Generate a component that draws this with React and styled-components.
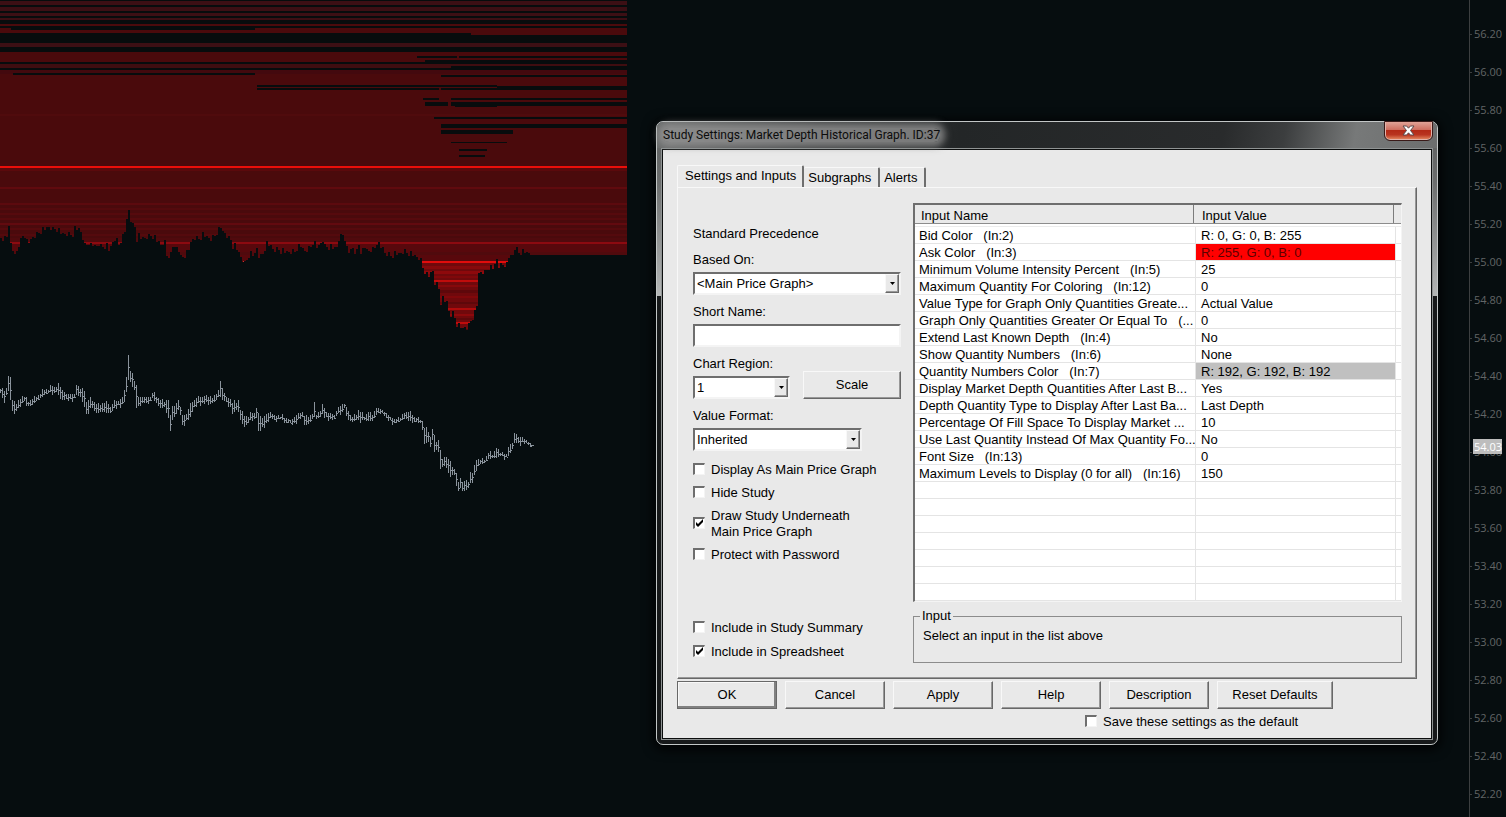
import React, { useState } from "react";
import styled, { createGlobalStyle, css } from "styled-components";

const prices = [
  "56.40", "56.20", "56.00", "55.80", "55.60", "55.40", "55.20", "55.00",
  "54.80", "54.60", "54.40", "54.20", "54.00", "53.80", "53.60", "53.40",
  "53.20", "53.00", "52.80", "52.60", "52.40", "52.20",
];

const inputs = [
  { name: "Bid Color   (In:2)", value: "R: 0, G: 0, B: 255" },
  { name: "Ask Color   (In:3)", value: "R: 255, G: 0, B: 0", bg: "#ff0000", color: "#5c0000" },
  { name: "Minimum Volume Intensity Percent   (In:5)", value: "25" },
  { name: "Maximum Quantity For Coloring   (In:12)", value: "0" },
  { name: "Value Type for Graph Only Quantities Greate...", value: "Actual Value" },
  { name: "Graph Only Quantities Greater Or Equal To   (...", value: "0" },
  { name: "Extend Last Known Depth   (In:4)", value: "No" },
  { name: "Show Quantity Numbers   (In:6)", value: "None" },
  { name: "Quantity Numbers Color   (In:7)", value: "R: 192, G: 192, B: 192", bg: "#c0c0c0" },
  { name: "Display Market Depth Quantities After Last B...", value: "Yes" },
  { name: "Depth Quantity Type to Display After Last Ba...", value: "Last Depth" },
  { name: "Percentage Of Fill Space To Display Market ...", value: "10" },
  { name: "Use Last Quantity Instead Of Max Quantity Fo...", value: "No" },
  { name: "Font Size   (In:13)", value: "0" },
  { name: "Maximum Levels to Display (0 for all)   (In:16)", value: "150" },
];

// lower edge of the ask depth area
const depthEdge =
  "0,238 3,239 6,236 7,223 9,223 9,237 10,246 12,250 14,255 16,251 18,245 20,240 22,235 24,235 25,242 29,242 31,238 34,236 37,233 41,230 44,229 49,226 51,230 54,228 57,230 60,233 64,234 72,234 73,229 79,229 81,234 82,238 84,245 88,242 90,246 93,244 95,248 97,243 100,246 106,246 108,250 111,245 113,238 116,240 118,244 121,238 123,235 125,227 127,213 128,210 129,214 131,225 134,226 135,243 137,234 139,238 145,238 150,235 153,236 155,240 158,242 160,245 165,241 166,255 171,255 172,246 173,251 175,245 178,250 180,257 183,256 187,252 189,245 191,240 193,238 198,238 202,235 205,237 210,239 213,236 215,233 218,230 220,227 221,232 224,233 227,238 230,239 231,246 234,246 237,250 239,255 241,259 244,263 246,259 248,255 251,253 253,257 256,248 257,255 259,257 262,253 264,248 266,244 270,246 273,250 277,248 280,251 287,252 294,251 297,247 301,246 303,251 306,250 310,246 313,240 315,247 319,246 321,240 323,240 324,246 330,247 333,249 336,247 337,240 339,237 342,234 344,238 345,247 348,252 352,248 353,253 357,250 358,244 359,251 363,251 364,247 367,252 370,250 374,247 376,242 378,245 382,248 383,253 390,255 397,254 404,251 407,253 413,255 417,257 420,260 422,267 425,273 427,277 430,273 432,271 433,283 436,284 438,288 439,303 442,299 446,302 447,305 449,316 452,313 454,317 456,324 460,327 462,329 463,325 465,329 467,327 469,322 472,317 474,313 476,305 477,300 477,275 481,271 483,273 487,267 492,268 495,263 496,259 497,266 502,264 507,265 507,257 512,255 513,247 516,249 518,252 523,252 528,253 530,255 627,255";

// x, y, width, height, fill
const depthLevels = [
  [0, 0, 627, 20, "#3c0f14"],
  [0, 43, 627, 4, "#3c0f14"],
  [0, 64, 627, 4, "#3f0d10"],
  [0, 70, 627, 4, "#43090e"],
  [0, 114, 627, 2, "#500b0d"],
  [0, 168, 627, 3, "#5a090c"],
  [0, 187, 627, 2, "#600a0e"],
  [0, 203, 627, 2, "#5c0a0e"],
  [0, 208, 627, 2, "#540a0d"],
  [0, 213, 627, 2, "#560a0d"],
  [0, 218, 627, 2, "#560a0d"],
  [0, 223, 627, 2, "#620a0f"],
  [0, 228, 627, 2, "#560a0d"],
  [0, 234, 627, 2, "#540a0d"],
  [0, 238, 627, 4, "#500a0d"],
  [0, 242, 627, 2, "#8c0a10"],
  [0, 244, 627, 17, "#58080c"],
  [0, 252, 627, 3, "#500a0d"],
  [415, 263, 100, 66, "#70090c"],
  [415, 266, 100, 3, "#86090c"],
  [415, 271, 100, 3, "#8e090c"],
  [415, 276, 100, 2, "#80080b"],
  [415, 280, 100, 2, "#c00c0c"],
  [415, 285, 100, 2, "#86090c"],
  [415, 290, 100, 3, "#5e080b"],
  [415, 296, 100, 2, "#80080b"],
  [415, 302, 100, 2, "#5e080b"],
  [415, 308, 100, 2, "#b00b0c"],
  [415, 314, 100, 2, "#8c090c"],
  [415, 318, 100, 2, "#5e080b"],
  [415, 322, 100, 2, "#c00c0c"],
  [420, 261, 88, 2, "#e20c0c"],
  [243, 261, 2, 2, "#c83030"],
  [0, 166, 627, 2, "#ea0f0a"],
];

// x, y, width, height
const emptyLevels = [
  [0, 0, 627, 1],
  [0, 5, 627, 2],
  [0, 11, 627, 2],
  [0, 16, 627, 2],
  [0, 20, 627, 4],
  [0, 26, 627, 2],
  [11, 28, 244, 2],
  [0, 33, 471, 2],
  [0, 35, 627, 8],
  [0, 47, 627, 5],
  [0, 62, 425, 2],
  [0, 68, 451, 2],
  [13, 73, 242, 2],
  [257, 85, 240, 2],
  [257, 88, 182, 2],
  [441, 88, 56, 2],
  [497, 86, 130, 4],
  [417, 56, 40, 2],
  [459, 56, 168, 2],
  [425, 60, 202, 4],
  [451, 66, 176, 4],
  [441, 75, 186, 2],
  [423, 98, 16, 2],
  [451, 98, 176, 2],
  [425, 102, 23, 4],
  [451, 102, 176, 4],
  [455, 106, 42, 1],
  [434, 117, 193, 2],
  [441, 124, 186, 4],
  [441, 130, 72, 4],
  [451, 142, 56, 1],
  [459, 149, 28, 2],
  [459, 155, 26, 2],
];

// x, high, low of the turning bars, the ones between are filled in
const swings = [
  [0, 389, 393], [4, 391, 403], [6, 388, 395], [8, 376, 391], [10, 377, 400],
  [12, 400, 411], [14, 401, 414], [16, 404, 411], [18, 400, 408], [20, 399, 407],
  [22, 396, 403], [24, 397, 401], [26, 397, 406], [28, 402, 406], [32, 399, 405],
  [36, 397, 401], [40, 394, 398], [44, 390, 395], [48, 390, 393], [50, 385, 392],
  [54, 387, 393], [56, 387, 392], [58, 383, 395], [62, 390, 400], [66, 394, 399],
  [70, 394, 399], [74, 394, 398], [76, 385, 395], [80, 389, 397], [84, 391, 407],
  [86, 402, 414], [90, 397, 408], [92, 401, 408], [96, 404, 413], [100, 405, 412],
  [104, 403, 412], [108, 404, 413], [110, 407, 413], [114, 400, 408], [118, 401, 405],
  [122, 397, 404], [124, 390, 402], [126, 377, 392], [128, 355, 380], [130, 371, 382],
  [132, 373, 387], [134, 381, 390], [136, 385, 408], [138, 397, 406], [142, 397, 403],
  [146, 397, 403], [150, 397, 401], [152, 393, 398], [156, 397, 403], [160, 400, 408],
  [164, 402, 407], [168, 400, 418], [170, 415, 431], [172, 406, 420], [174, 406, 417],
  [178, 400, 410], [180, 407, 415], [182, 415, 425], [186, 414, 420], [190, 403, 417],
  [194, 400, 407], [198, 396, 403], [202, 397, 403], [206, 395, 402], [208, 397, 405],
  [212, 398, 403], [216, 394, 400], [218, 390, 397], [220, 381, 397], [222, 388, 400],
  [226, 397, 402], [230, 399, 407], [232, 403, 414], [236, 403, 410], [238, 400, 412],
  [240, 410, 420], [244, 416, 427], [248, 417, 423], [250, 412, 420], [254, 413, 419],
  [256, 408, 418], [258, 413, 431], [262, 418, 427], [266, 414, 423], [270, 412, 418],
  [274, 415, 420], [280, 417, 419], [286, 418, 423], [290, 420, 423], [294, 417, 423],
  [298, 413, 419], [302, 412, 417], [304, 416, 425], [308, 417, 424], [312, 414, 419],
  [314, 402, 417], [316, 415, 419], [320, 411, 417], [322, 404, 414], [326, 412, 417],
  [330, 413, 419], [334, 415, 419], [338, 407, 413], [342, 404, 412], [344, 404, 408],
  [346, 407, 416], [350, 415, 421], [352, 417, 422], [356, 415, 420], [358, 410, 420],
  [364, 417, 420], [368, 412, 421], [372, 415, 421], [376, 408, 415], [378, 408, 413],
  [382, 410, 413], [386, 413, 418], [390, 417, 420], [394, 419, 423], [400, 418, 421],
  [404, 413, 419], [406, 412, 419], [408, 412, 421], [414, 417, 422], [420, 420, 423],
  [422, 421, 430], [424, 428, 444], [428, 432, 442], [430, 437, 447], [432, 429, 440],
  [434, 435, 452], [436, 442, 450], [438, 440, 452], [440, 450, 469], [442, 459, 467],
  [444, 457, 466], [446, 457, 468], [450, 461, 477], [452, 467, 475], [454, 469, 475],
  [456, 473, 486], [458, 482, 491], [460, 478, 488], [462, 482, 491], [466, 480, 490],
  [468, 482, 488], [470, 472, 483], [472, 473, 483], [474, 465, 475], [476, 460, 471],
  [478, 459, 466], [480, 460, 464], [484, 460, 463], [488, 453, 459], [492, 455, 458],
  [496, 448, 458], [500, 453, 456], [506, 454, 457], [508, 447, 456], [512, 443, 449],
  [514, 433, 443], [516, 434, 443], [518, 437, 443], [522, 437, 442], [526, 440, 443],
  [530, 443, 447], [532, 445, 447],
];

const jitter = [0, 2, -2, 1, 3, -3, 1, -1];

// one two pixel column per bar
const buildDepthEdge = () => {
  const points = depthEdge.split(" ").map((p) => p.split(",").map(Number));
  let d = "M0 0";
  let i = 0;
  for (let x = 0; x < 530; x += 2) {
    while (points[i + 1][0] <= x) i++;
    const [x1, y1] = points[i];
    const [x2, y2] = points[i + 1];
    const y = y1 + ((y2 - y1) * (x - x1)) / (x2 - x1);
    d += `L${x} ${Math.round(y + jitter[(x / 2) % 8])}h2`;
    d = d.replace(/L(\d+) (\d+)h2$/, "H$1V$2h2");
  }
  return d + "V255H627V0z";
};

const buildBars = () => {
  let d = "";
  for (let i = 0; i < swings.length - 1; i++) {
    const [x1, h1, l1] = swings[i];
    const [x2, h2, l2] = swings[i + 1];
    for (let x = x1; x < x2; x += 2) {
      const t = (x - x1) / (x2 - x1);
      const extra = t > 0 ? Math.abs(jitter[(x / 2) % 8]) : 0;
      const high = Math.round(h1 + (h2 - h1) * t) - (x % 4 ? extra : 0);
      const low = Math.round(l1 + (l2 - l1) * t) + (x % 4 ? 0 : extra);
      const close = Math.round((high + low) / 2 + (x % 4 ? 1 : -1));
      d += `M${x} ${high}h1V${low}h-1zM${x + 1} ${close}h1v1h-1z`;
    }
  }
  return d + "M531 445h3v1h-3z";
};

const DepthChart = () => (
  <Plot width="640" height="560" role="img" aria-label="Market depth historical graph">
    <defs>
      <clipPath id="depth">
        <path d={buildDepthEdge()} shapeRendering="crispEdges" />
      </clipPath>
    </defs>
    <g clipPath="url(#depth)" shapeRendering="crispEdges">
      <rect width="627" height="340" fill="#4a0a0c" />
      {depthLevels.map(([x, y, w, h, fill]) => (
        <rect key={`${x}-${y}`} x={x} y={y} width={w} height={h} fill={fill} />
      ))}
      {emptyLevels.map(([x, y, w, h]) => (
        <rect key={`${x}-${y}`} x={x} y={y} width={w} height={h} fill="#070c0d" />
      ))}
    </g>
    <path d={buildBars()} fill="#8a939c" shapeRendering="crispEdges" />
  </Plot>
);

const Combo = ({ id, label, options, width }) => (
  <Field>
    <label htmlFor={id}>{label}</label>
    <ComboBox $width={width}>
      <select id={id}>
        {options.map((option) => (
          <option key={option}>{option}</option>
        ))}
      </select>
      <ComboArrow>
        <svg width="5" height="3" viewBox="0 0 5 3">
          <path d="M0 0h5L2.5 3z" />
        </svg>
      </ComboArrow>
    </ComboBox>
  </Field>
);

const Check = ({ children, checked = false }) => {
  const [on, setOn] = useState(checked);
  return (
    <CheckLabel>
      <CheckBox type="checkbox" checked={on} onChange={() => setOn(!on)} />
      <span>{children}</span>
    </CheckLabel>
  );
};

const App = () => {
  const [shortName, setShortName] = useState("");
  return (
    <>
      <GlobalStyle />
      <Desktop>
        <DepthChart />
        <Axis>
          {prices.map((price) => (
            <Price key={price}>
              {price}
              {price === "54.00" && <LastPrice>54.03</LastPrice>}
            </Price>
          ))}
        </Axis>
        <Dialog role="dialog" aria-labelledby="dialog-title">
          <TitleBar>
            <Title id="dialog-title">Study Settings: Market Depth Historical Graph. ID:37</Title>
            <CloseButton aria-label="Close">
              <svg width="13" height="11" viewBox="0 0 13 11">
                <path
                  d="M1 1h3.6l1.9 2.2L8.4 1H12L8.5 5.5 12 10H8.4L6.5 7.8 4.6 10H1l3.5-4.5z"
                  fill="#fff"
                  stroke="#5a4a4c"
                  strokeWidth="1"
                />
              </svg>
            </CloseButton>
          </TitleBar>
          <Body>
            <Tabs role="tablist">
              <Tab role="tab" aria-selected="true" $active>
                Settings and Inputs
              </Tab>
              <Tab role="tab">Subgraphs</Tab>
              <Tab role="tab">Alerts</Tab>
            </Tabs>
            <Panel>
              <Options>
                <Precedence>Standard Precedence</Precedence>
                <Fields>
                  <Combo id="based-on" label="Based On:" options={["<Main Price Graph>"]} />
                  <Field>
                    <label htmlFor="short-name">Short Name:</label>
                    <TextInput
                      id="short-name"
                      value={shortName}
                      onChange={(e) => setShortName(e.target.value)}
                    />
                  </Field>
                  <FieldRow>
                    <Combo id="region" label="Chart Region:" options={["1"]} width="97px" />
                    <Button $width="98px">Scale</Button>
                  </FieldRow>
                  <Combo id="format" label="Value Format:" options={["Inherited"]} width="169px" />
                </Fields>
                <Checks>
                  <Check>Display As Main Price Graph</Check>
                  <Check>Hide Study</Check>
                  <Check checked>
                    Draw Study Underneath
                    <br />
                    Main Price Graph
                  </Check>
                  <Check>Protect with Password</Check>
                </Checks>
                <BottomChecks>
                  <Check>Include in Study Summary</Check>
                  <Check checked>Include in Spreadsheet</Check>
                </BottomChecks>
              </Options>
              <Details>
                <ListFrame>
                  <InputTable>
                    <colgroup>
                      <col />
                      <col width="200" />
                      <col width="5" />
                    </colgroup>
                    <thead>
                      <tr>
                        <th>
                          <HeadCell>Input Name</HeadCell>
                        </th>
                        <th>
                          <HeadCell>Input Value</HeadCell>
                        </th>
                        <th />
                      </tr>
                      <SpacerRow>
                        <td colSpan="3" />
                      </SpacerRow>
                    </thead>
                    <tbody>
                      {inputs.map((input) => (
                        <tr key={input.name}>
                          <Cell>{input.name}</Cell>
                          <Cell $bg={input.bg} $color={input.color}>
                            {input.value}
                          </Cell>
                          <Cell />
                        </tr>
                      ))}
                      {[...Array(7)].map((_, i) => (
                        <tr key={i}>
                          <Cell />
                          <Cell />
                          <Cell />
                        </tr>
                      ))}
                    </tbody>
                  </InputTable>
                </ListFrame>
                <Group>
                  <legend>Input</legend>
                  Select an input in the list above
                </Group>
              </Details>
            </Panel>
            <Buttons>
              <Button $default>OK</Button>
              <Button>Cancel</Button>
              <Button>Apply</Button>
              <Button>Help</Button>
              <Button>Description</Button>
              <Button $width="116px">Reset Defaults</Button>
            </Buttons>
            <SaveRow>
              <Check>Save these settings as the default</Check>
            </SaveRow>
          </Body>
        </Dialog>
      </Desktop>
    </>
  );
};

const GlobalStyle = createGlobalStyle`
  * {
    box-sizing: border-box;
  }
  body {
    margin: 0;
    background: #060d0f;
  }
  body, button, input, select {
    font-family: "Liberation Sans", Arial, sans-serif;
    font-size: 13px;
    line-height: 16px;
    color: #000;
  }
`;

const Desktop = styled.div`
  position: relative;
  display: flex;
  justify-content: space-between;
  height: 100vh;
  min-height: 745px;
  overflow: hidden;
`;
const Plot = styled.svg`
  display: block;
  flex: none;
`;
const Axis = styled.div`
  width: 37px;
  overflow: hidden;
  border-left: 1px solid #3c3f40;
  font-family: "Open Sans", "Noto Sans", sans-serif;
  font-size: 11px;
  color: #626566;
`;
const Price = styled.div`
  position: relative;
  display: flex;
  align-items: center;
  gap: 2px;
  height: 38px;
  &:first-child {
    margin-top: -23px;
  }
  &::before {
    content: "";
    width: 2px;
    height: 1px;
    background: #3c3f40;
  }
`;
const LastPrice = styled.span`
  position: absolute;
  left: 3px;
  top: 6px;
  height: 15px;
  padding-left: 1px;
  line-height: 15px;
  background: #bdbdbd;
  color: #fff;
`;
const Dialog = styled.div`
  position: absolute;
  top: 121px;
  right: 68px;
  width: 782px;
  padding: 0 4px 4px;
  border: 1px solid #c2c6c6;
  border-radius: 7px;
  background: linear-gradient(#5c5e5e, #6c6e6e 60px, #b4b6b6 174px, #17191a 174px);
  box-shadow: 0 2px 12px 2px #000;
`;
const TitleBar = styled.div`
  display: flex;
  justify-content: space-between;
  height: 26px;
  margin: 0 -4px;
  padding-left: 6px;
  border-radius: 6px 6px 0 0;
  background: linear-gradient(
    100deg,
    #6c6e6e,
    #3a3c3d 160px,
    #232627 300px,
    #292b2c 560px,
    #3c3e3f 620px,
    #777979 690px,
    #6c6e6e
  );
`;
const Title = styled.span`
  align-self: center;
  height: 14px;
  line-height: 14px;
  font-family: Roboto, "Open Sans", sans-serif;
  font-size: 12px;
  color: #0c0c0c;
  background: rgba(150, 150, 150, 0.75);
  box-shadow: 0 0 7px 5px rgba(150, 150, 150, 0.75);
  border-radius: 6px;
`;
const CloseButton = styled.button`
  display: flex;
  align-items: center;
  justify-content: center;
  width: 47px;
  height: 18px;
  margin-right: 5px;
  padding: 0;
  border: 1px solid #e3b4ac;
  border-top: 0;
  border-radius: 0 0 5px 5px;
  outline: 1px solid #3a1a18;
  background: linear-gradient(#e0a397, #cf6f60 45%, #b32a17 50%, #b93420 75%, #e0805a);
`;
const Body = styled.div`
  padding: 15px 14px 8px;
  border: 1px solid #0c0e0e;
  outline: 1px solid #8f9393;
  margin: 1px;
  background: #e9e9e9;
`;
const Tabs = styled.div`
  display: flex;
  align-items: flex-end;
`;
const Tab = styled.button`
  height: 20px;
  padding: 1px 7px 0 4px;
  border: 0;
  border-top: 1px solid #f8f8f8;
  border-right: 2px solid #6e6e6e;
  border-radius: 2px 2px 0 0;
  background: none;
  ${({ $active }) =>
    $active &&
    css`
      height: 22px;
      padding: 0 6px 2px 7px;
      border-left: 1px solid #f8f8f8;
    `}
`;
const raised = css`
  border: 1px solid;
  border-color: #f8f8f8 #686868 #686868 #f8f8f8;
  box-shadow: inset -1px -1px #989898;
`;
const Panel = styled.div`
  ${raised}
  display: flex;
  gap: 12px;
  padding: 15px 14px 15px 15px;
`;
const Options = styled.div`
  display: flex;
  flex-direction: column;
  flex: none;
  width: 208px;
  padding: 23px 0 3px;
`;
const Precedence = styled.div`
  margin-bottom: 10px;
`;
const Fields = styled.div`
  display: flex;
  flex-direction: column;
  gap: 9px;
  margin-bottom: 11px;
`;
const Field = styled.div`
  display: flex;
  flex-direction: column;
  gap: 4px;
`;
const FieldRow = styled.div`
  display: flex;
  justify-content: space-between;
  align-items: flex-end;
`;
const sunken = css`
  border: 2px solid;
  border-color: #6e6e6e #f4f4f4 #f4f4f4 #6e6e6e;
  background: #fff;
`;
const ComboBox = styled.div`
  ${sunken}
  display: flex;
  width: ${({ $width }) => $width || "100%"};
  height: 23px;
  position: relative;
  select {
    flex: 1;
    padding: 0 2px;
    border: 0;
    background: none;
    appearance: none;
  }
`;
const ComboArrow = styled.span`
  ${raised}
  position: absolute;
  top: 0;
  right: 0;
  bottom: 0;
  display: flex;
  align-items: center;
  justify-content: center;
  width: 14px;
  background: #e9e9e9;
  pointer-events: none;
`;
const TextInput = styled.input`
  ${sunken}
  width: 100%;
  height: 23px;
  padding: 0 2px;
`;
const Button = styled.button`
  ${raised}
  width: ${({ $width }) => $width || "100px"};
  height: 28px;
  padding: 0;
  background: #e9e9e9;
  ${({ $default }) =>
    $default &&
    css`
      border-color: #686868;
      box-shadow: inset -2px -2px #808080, inset 1px 1px #f8f8f8;
    `}
`;
const Checks = styled.div`
  display: flex;
  flex-direction: column;
  gap: 7px;
`;
const BottomChecks = styled(Checks)`
  gap: 8px;
  margin-top: auto;
`;
const CheckLabel = styled.label`
  display: flex;
  align-items: center;
  gap: 6px;
`;
const CheckBox = styled.input`
  ${sunken}
  appearance: none;
  flex: none;
  width: 12px;
  height: 12px;
  margin: 0 0 2px;
  border-width: 2px 1px 1px 2px;
  &:checked {
    background: #fff
      url("data:image/svg+xml,%3Csvg xmlns='http://www.w3.org/2000/svg' viewBox='0 0 9 9'%3E%3Cpath d='M1 3v3l2 2 5-5V0L3 5z'/%3E%3C/svg%3E")
      center / 9px 9px no-repeat;
  }
`;
const Details = styled.div`
  flex: 1;
  min-width: 0;
`;
const ListFrame = styled.div`
  border: 2px solid;
  border-width: 2px 1px 1px 2px;
  border-color: #6e6e6e #f4f4f4 #f4f4f4 #6e6e6e;
  background: #fff;
`;
const InputTable = styled.table`
  width: 100%;
  table-layout: fixed;
  border-collapse: separate;
  border-spacing: 0;
  th {
    height: 19px;
    padding: 0 2px 0 0;
    border-bottom: 1px solid #8c8c8c;
    background: #e9e9e9;
    font-weight: normal;
    text-align: left;
  }
`;
const HeadCell = styled.div`
  height: 18px;
  padding: 3px 0 0 6px;
  line-height: 15px;
  border-right: 1px solid #7c7c7c;
`;
const SpacerRow = styled.tr`
  td {
    height: 3px;
    padding: 0;
    border-bottom: 1px solid #ececec;
  }
`;
const Cell = styled.td`
  height: 17px;
  padding: 1px 0 0 4px;
  line-height: 15px;
  overflow: hidden;
  white-space: pre;
  border-right: 1px solid #e4e4e4;
  border-bottom: 1px solid #e4e4e4;
  background: ${({ $bg }) => $bg || "#fff"};
  color: ${({ $color }) => $color || "#000"};
  & + & {
    padding-left: 5px;
  }
  &:last-child {
    padding: 0;
    border-right: 0;
  }
`;
const Group = styled.fieldset`
  height: 55px;
  margin: 6px 0 0;
  padding: 4px 9px 0;
  border: 1px solid #8c8c8c;
  legend {
    margin-left: -3px;
    padding: 0 2px;
  }
`;
const Buttons = styled.div`
  display: flex;
  gap: 8px;
  margin-top: 2px;
`;
const SaveRow = styled.div`
  display: flex;
  margin-top: 5px;
  padding-left: 408px;
`;

export default App;
